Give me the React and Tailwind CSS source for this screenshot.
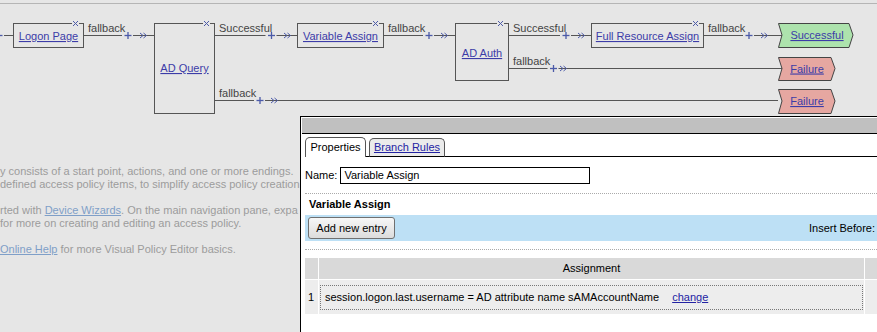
import React from 'react'

const LINE = '#555555'
const BLUE = '#4b5aa8'
const LINK = '#3c3ca8'

function Plus({ x, y }) {
  return (
    <g stroke={BLUE} strokeWidth="1.3">
      <line x1={x - 3.5} y1={y} x2={x + 3.5} y2={y} />
      <line x1={x} y1={y - 3.5} x2={x} y2={y + 3.5} />
    </g>
  )
}

function Chevrons({ x, y }) {
  return (
    <g stroke={BLUE} strokeWidth="1" fill="none">
      <polyline points={`${x},${y - 2.5} ${x + 3},${y} ${x},${y + 2.5}`} />
      <polyline points={`${x + 3.5},${y - 2.5} ${x + 6.5},${y} ${x + 3.5},${y + 2.5}`} />
    </g>
  )
}

// a wire: line from x1 to x2 with a plus and the double chevron on it
function Wire({ x1, x2, y, plus, chev }) {
  return (
    <g>
      <line x1={x1} y1={y} x2={plus - 6} y2={y} stroke={LINE} />
      <line x1={plus + 5} y1={y} x2={x2} y2={y} stroke={LINE} />
      <Plus x={plus} y={y} />
      <Chevrons x={chev} y={y} />
    </g>
  )
}

function Node({ x, y, w, h, label, ty }) {
  const r = x + w
  return (
    <g>
      <rect x={x + 0.5} y={y + 0.5} width={w} height={h} fill="none" stroke={LINE} />
      <rect x={r - 11} y={y - 1} width={7} height={3} fill="#e6e6e6" />
      <g stroke={BLUE} strokeWidth="1">
        <line x1={r - 10} y1={y - 2} x2={r - 5} y2={y + 3} />
        <line x1={r - 5} y1={y - 2} x2={r - 10} y2={y + 3} />
      </g>
      <text x={x + w / 2 + 0.5} y={ty} textAnchor="middle" fill={LINK} fontSize="11" className="underline">
        {label}
      </text>
    </g>
  )
}

function Ending({ x, y, w, h, label, fill, tx }) {
  const m = y + h / 2
  const pts = `${x + 0.5},${y + 0.5} ${x + w - 4},${y + 0.5} ${x + w},${m} ${x + w - 4},${y + h + 0.5} ${x + 0.5},${y + h + 0.5} ${x + 4},${m}`
  return (
    <g>
      <polygon points={pts} fill={fill} stroke="#444" />
      <text x={tx} y={m + 4} textAnchor="middle" fill={LINK} fontSize="11" className="underline">
        {label}
      </text>
    </g>
  )
}

function Label({ x, y, children }) {
  return (
    <text x={x} y={y} fill="#444" fontSize="11">
      {children}
    </text>
  )
}

function Diagram() {
  return (
    <svg width="877" height="112" viewBox="0 4 877 112" className="block">
      {/* entry */}
      <line x1="4" y1="35.5" x2="13" y2="35.5" stroke={LINE} />
      <Plus x={-1} y={35.5} />

      <Node x={13} y={23} w={70} h={24} label="Logon Page" ty={40} />
      <Label x={88} y={32}>fallback</Label>
      <Wire x1={84} x2={154} y={35.5} plus={128} chev={140} />

      <Node x={154} y={23} w={60} h={90} label="AD Query" ty={72} />
      <Label x={219} y={32}>Successful</Label>
      <Wire x1={215} x2={297} y={35.5} plus={271.5} chev={284} />
      <Label x={219} y={97}>fallback</Label>
      <Wire x1={215} x2={778} y={100.5} plus={260} chev={271} />

      <Node x={297} y={23} w={86} h={24} label="Variable Assign" ty={40} />
      <Label x={388} y={32}>fallback</Label>
      <Wire x1={384} x2={455} y={35.5} plus={429} chev={441} />

      <Node x={455} y={23} w={53} h={57} label="AD Auth" ty={57} />
      <Label x={513} y={32}>Successful</Label>
      <Wire x1={509} x2={591} y={35.5} plus={566} chev={578} />
      <Label x={513} y={65}>fallback</Label>
      <Wire x1={509} x2={782} y={68.5} plus={553.5} chev={560} />

      <Node x={591} y={23} w={112} h={24} label="Full Resource Assign" ty={40} />
      <Label x={708} y={32}>fallback</Label>
      <Wire x1={704} x2={782} y={35.5} plus={749} chev={761} />

      <Ending x={778} y={23} w={75} h={24} label="Successful" fill="#ade3ad" tx={817} />
      <Ending x={778} y={57} w={57} h={23} label="Failure" fill="#e6a7a1" tx={807} />
      <Ending x={778} y={89} w={57} h={24} label="Failure" fill="#e6a7a1" tx={807} />
    </svg>
  )
}

function HelpText() {
  const link = 'text-[#7f9fc8] underline'
  return (
    <div className="w-[299px] pt-[49px] text-[11px] leading-[13px] text-[#9c9c9c] whitespace-nowrap">
      <p>y consists of a start point, actions, and one or more endings.</p>
      <p>defined access policy items, to simplify access policy creation.</p>
      <p className="mt-[13px]">
        rted with <span className={link}>Device Wizards</span>. On the main navigation pane, expa
      </p>
      <p>for more on creating and editing an access policy.</p>
      <p className="mt-[13px]">
        <span className={link}>Online Help</span> for more Visual Policy Editor basics.
      </p>
    </div>
  )
}

function Panel() {
  return (
    <div className="absolute left-[300px] top-[116px] right-0 bottom-0 z-10 bg-white border-l border-t border-black text-[11px] text-black">
      <div className="mt-px ml-px h-[16px] bg-[#c0c0c0] border-b border-black" />
      <div className="pl-[4px]">
        <div className="mt-[3px] flex items-end">
          <div className="w-[61px] h-[20px] flex items-center justify-center rounded-t-[5px] border border-b-0 border-[#555] bg-white">
            Properties
          </div>
          <div className="w-[3px] h-px bg-black" />
          <div className="w-[76px] h-[19px] flex items-center justify-center rounded-t-[5px] border border-[#555] border-b-black bg-[#ebebeb]">
            <span className="text-[#2323a3] underline">Branch Rules</span>
          </div>
          <div className="flex-1 h-px bg-black" />
        </div>

        <div className="mt-[10px] flex items-center gap-[3px]">
          <span>Name:</span>
          <div className="w-[250px] h-[17px] border border-black px-[3px] flex items-center">Variable Assign</div>
        </div>

        <div className="mt-[9px] border-t border-dotted border-[#aaa]" />
        <div className="h-[21px] flex items-center pl-[4px] font-bold">Variable Assign</div>

        <div className="h-[26px] bg-[#bde0f5] flex items-center justify-between pl-[3px] pr-[2px]">
          <button className="w-[87px] h-[22px] rounded-[3px] border border-[#707070] bg-gradient-to-b from-[#f7f7f7] to-[#dcdcdc] text-[11px]">
            Add new entry
          </button>
          <span>Insert Before:</span>
        </div>

        <div className="mt-[8px] border-t border-dotted border-[#aaa]" />

        <div className="mt-[8px]">
          <div className="flex h-[21px] gap-px">
            <div className="w-[13px] bg-[#d9d9d9]" />
            <div className="w-[545px] bg-[#d9d9d9] flex items-center justify-center">Assignment</div>
            <div className="flex-1 bg-[#d9d9d9]" />
          </div>
          <div className="mt-px flex h-[34px] gap-px">
            <div className="w-[13px] bg-[#ededed] flex items-center pl-[3px]">1</div>
            <div className="w-[545px] bg-[#ededed] pt-[5px] pb-[4px] pl-px pr-px">
              <div className="h-full border border-dotted border-[#777] flex items-center pl-[4px] gap-[13px]">
                <span>session.logon.last.username = AD attribute name sAMAccountName</span>
                <span className="text-[#2323a3] underline">change</span>
              </div>
            </div>
            <div className="flex-1 bg-[#ededed]" />
          </div>
        </div>
      </div>
    </div>
  )
}

export default function App() {
  return (
    <div className="relative w-[877px] h-[332px] overflow-hidden bg-[#e6e6e6] font-['Liberation_Sans',Arial,sans-serif]">
      <div className="h-[3px]" />
      <div className="border-t border-[#b5b5b5]" />
      <Diagram />
      <HelpText />
      <Panel />
    </div>
  )
}
